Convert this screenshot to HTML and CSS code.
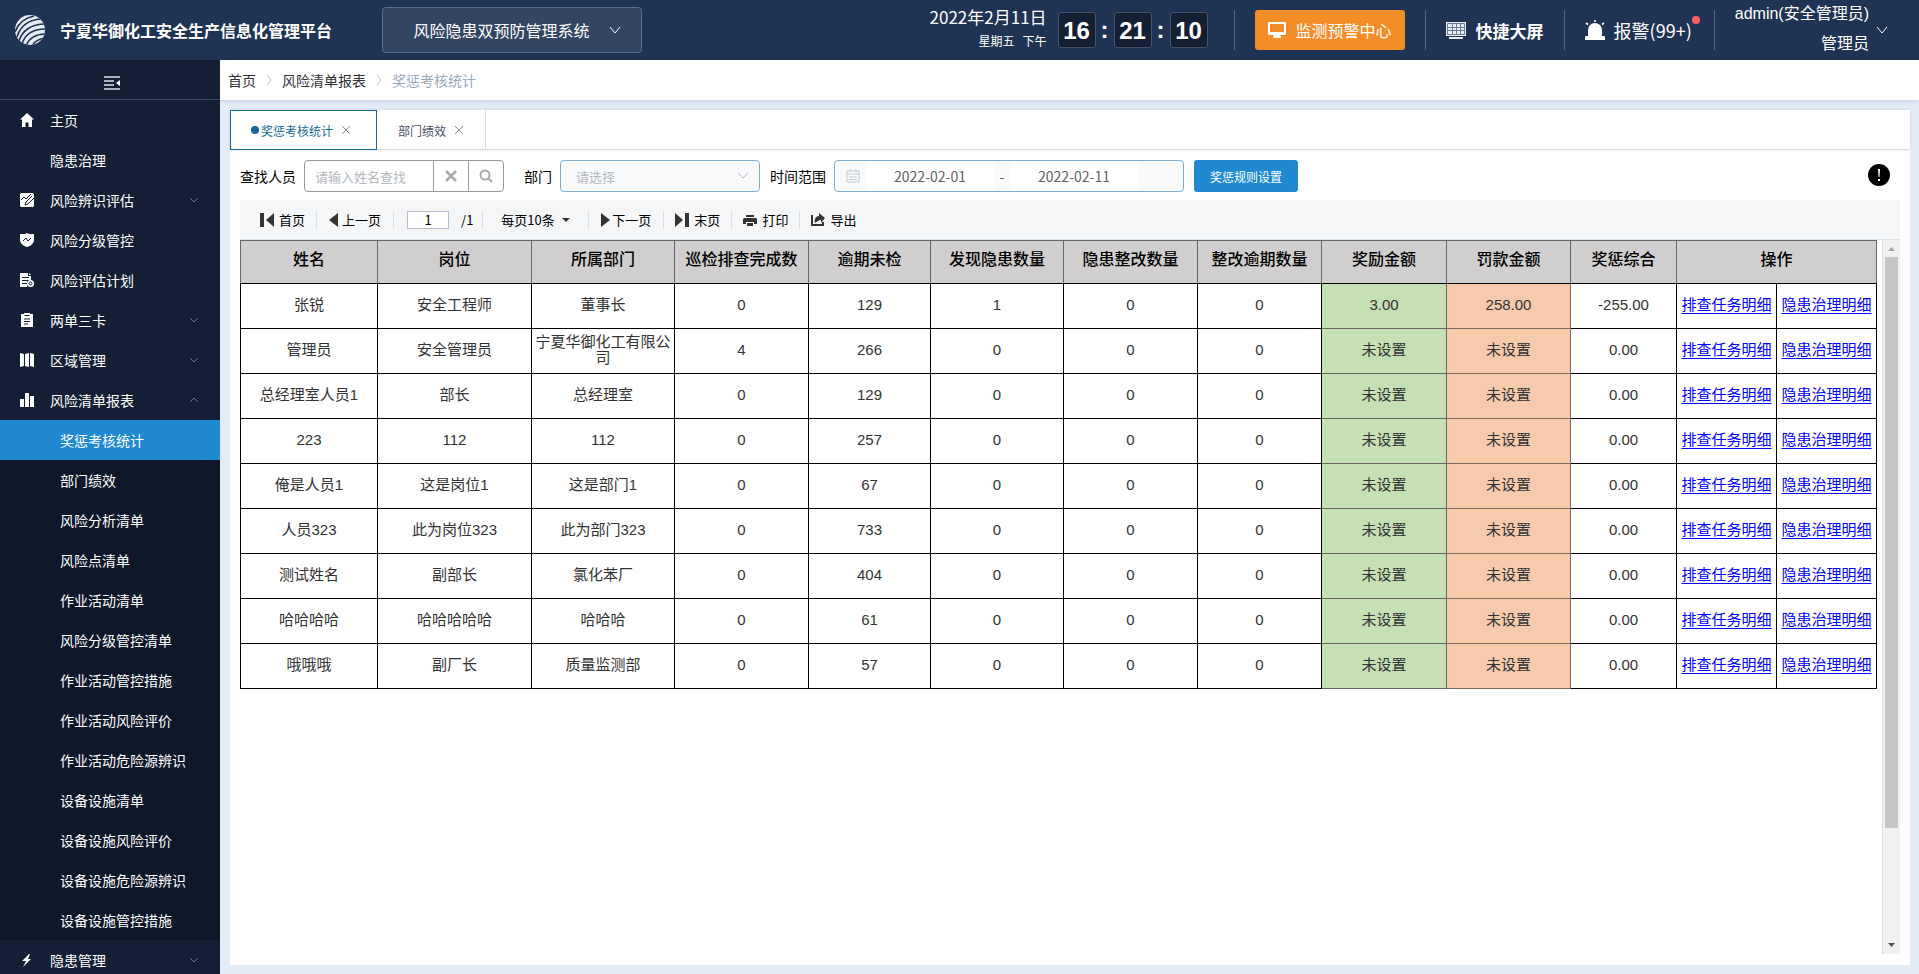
FILE: index.html
```
<!DOCTYPE html>
<html lang="zh-CN">
<head>
    <meta charset="UTF-8">
    <meta name="viewport" content="width=device-width, initial-scale=1.0">
    <title>宁夏华御化工安全生产信息化管理平台</title>
    <link rel="stylesheet" href="styles.css">
</head>
<body>
    <header class="header">
        <svg class="logo" viewBox="0 0 30 30">
            <defs><clipPath id="globe"><circle cx="15" cy="15" r="15"/></clipPath></defs>
            <g clip-path="url(#globe)">
                <path fill="#e6ebf2" d="M0 0h30v30H0z"/>
                <g fill="none" stroke="#1f3354" stroke-width="1.600">
                    <path d="M0 17C3 9 9 3 19 1"/>
                    <path d="M2 22C5 12 13 5 26 4"/>
                    <path d="M4 26C7 16 16 9 30 9"/>
                    <path d="M7 29C10 19 18 14 31 14"/>
                    <path d="M11 31C14 23 20 19 31 19"/>
                    <path d="M17 31C19 27 23 24 30 23"/>
                </g>
            </g>
        </svg>
        <h1 class="brand">宁夏华御化工安全生产信息化管理平台</h1>
        <button class="system-select" type="button">
            风险隐患双预防管理系统
            <svg class="chevron" viewBox="0 0 12 8"><path d="M1 1l5 6 5-6"/></svg>
        </button>

        <div class="clock">
            <div class="clock-date">
                <span class="date">2022年2月11日</span>
                <span class="week"><span>星期五</span><span>下午</span></span>
            </div>
            <span class="digit">16</span>
            <span class="colon">:</span>
            <span class="digit">21</span>
            <span class="colon">:</span>
            <span class="digit">10</span>
        </div>

        <div class="header-item">
            <button class="monitor-btn" type="button">
                <svg class="icon-monitor" viewBox="0 0 18 16"><path fill="#fff" fill-rule="evenodd" d="M1 0h16a1 1 0 0 1 1 1v11a1 1 0 0 1-1 1h-5v1h1v2H5v-2h1v-1H1a1 1 0 0 1-1-1V1a1 1 0 0 1 1-1zm1 2v8h14V2z"/></svg>
                监测预警中心
            </button>
        </div>
        <a class="header-item screen-link" href="#">
            <svg class="icon-screen" viewBox="0 0 20 17">
                <path fill="#e9edf3" d="M0 0h20v14H0zM3 15h14v2H3z"/>
                <path stroke="#6b7a93" fill="none" d="M1.500 1.500h17v11h-17zM2 5.500h16M2 8.500h16M6.500 2v10M10.500 2v10M14.500 2v10"/>
            </svg>
            快捷大屏
        </a>
        <a class="header-item alarm-link" href="#">
            <svg class="icon-alarm" viewBox="0 0 20 20">
                <path fill="#fff" d="M3 16v-6a7 7 0 0 1 14 0v6h2a1 1 0 0 1 1 1v3H0v-3a1 1 0 0 1 1-1z"/>
                <path stroke="#fff" stroke-width="1.600" d="M10 0v2M1 3l2 1.500M19 3l-2 1.500"/>
            </svg>
            报警(99+)
            <i class="badge"></i>
        </a>
        <button class="header-item user" type="button">
            <span class="user-name"><span>admin(安全管理员)</span><span>管理员</span></span>
            <svg class="chevron" viewBox="0 0 12 8"><path d="M1 1l5 6 5-6"/></svg>
        </button>
    </header>

    <div class="layout">
        <aside class="sidebar">
            <button class="collapse" type="button" aria-label="收起菜单">
                <svg viewBox="0 0 16 14"><path fill="none" stroke="#e0e4ea" stroke-width="1.600" d="M0 1h16M0 5h10M0 9h10M0 13h16"/><path fill="#fff" d="M16 4v6l-4-3z"/></svg>
            </button>
            <nav class="menu">
                <a class="menu-item" href="#">
                    <svg class="menu-icon" viewBox="0 0 14 14"><path d="M7 0l7 6.500h-2V14H8.500V9.500h-3V14H2V6.500H0z"/></svg>
                    主页
                </a>
                <a class="menu-item" href="#"><span class="menu-icon"></span>隐患治理</a>
                <a class="menu-item" href="#">
                    <svg class="menu-icon" viewBox="0 0 14 14"><path d="M1 0h12l1 1v12l-1 1H1l-1-1V1z"/><path class="cut" d="M1 7l3-3 2 2 5-5M12 3L6 9l-1 3 3-1 6-6"/></svg>
                    风险辨识评估
                    <svg class="arrow" viewBox="0 0 10 6"><path d="M1 1l4 4 4-4"/></svg>
                </a>
                <a class="menu-item" href="#">
                    <svg class="menu-icon" viewBox="0 0 14 14"><path d="M7 0l2 1h5v6c0 3-3 6-7 7-4-1-7-4-7-7V1h5z"/><path class="cut" d="M3 8l3-3 2 3 3-3"/></svg>
                    风险分级管控
                </a>
                <a class="menu-item" href="#">
                    <svg class="menu-icon" viewBox="0 0 14 14"><path d="M0 0h8v3h3v4H7v7H0zM9 0l2 2H9z"/><path class="cut" d="M2 4.500h7M2 7.500h5M2 10.500h5"/><circle cx="10.500" cy="10.500" r="3.500"/><circle class="cut" cx="10.500" cy="10.500" r="1.500"/></svg>
                    风险评估计划
                </a>
                <a class="menu-item" href="#">
                    <svg class="menu-icon" viewBox="0 0 14 14"><path d="M1 1h3V0h6v1h3v13H1z"/><path class="cut" d="M4.500 2.500h5M4 6h6M4 8.500h6M4 11h4"/></svg>
                    两单三卡
                    <svg class="arrow" viewBox="0 0 10 6"><path d="M1 1l4 4 4-4"/></svg>
                </a>
                <a class="menu-item" href="#">
                    <svg class="menu-icon" viewBox="0 0 14 14"><path d="M0 0l4 1v12l-4 1zM5 1l4-1v14l-4-1zM10 0l4 1v13l-4-1z"/></svg>
                    区域管理
                    <svg class="arrow" viewBox="0 0 10 6"><path d="M1 1l4 4 4-4"/></svg>
                </a>
                <a class="menu-item" href="#">
                    <svg class="menu-icon" viewBox="0 0 14 14"><path d="M0 6h4v8H0zM5 0h4v14H5zM10 3h4v11h-4z"/></svg>
                    风险清单报表
                    <svg class="arrow" viewBox="0 0 10 6"><path d="M1 5l4-4 4 4"/></svg>
                </a>
                <div class="submenu">
                    <a class="submenu-item active" href="#">奖惩考核统计</a>
                    <a class="submenu-item" href="#">部门绩效</a>
                    <a class="submenu-item" href="#">风险分析清单</a>
                    <a class="submenu-item" href="#">风险点清单</a>
                    <a class="submenu-item" href="#">作业活动清单</a>
                    <a class="submenu-item" href="#">风险分级管控清单</a>
                    <a class="submenu-item" href="#">作业活动管控措施</a>
                    <a class="submenu-item" href="#">作业活动风险评价</a>
                    <a class="submenu-item" href="#">作业活动危险源辨识</a>
                    <a class="submenu-item" href="#">设备设施清单</a>
                    <a class="submenu-item" href="#">设备设施风险评价</a>
                    <a class="submenu-item" href="#">设备设施危险源辨识</a>
                    <a class="submenu-item" href="#">设备设施管控措施</a>
                </div>
                <a class="menu-item" href="#">
                    <svg class="menu-icon" viewBox="0 0 14 14"><path d="M9 1L2 8h4l-3 6 8-8H8l2-5z"/></svg>
                    隐患管理
                    <svg class="arrow" viewBox="0 0 10 6"><path d="M1 1l4 4 4-4"/></svg>
                </a>
            </nav>
        </aside>

        <main class="main">
            <nav class="breadcrumb">
                <a href="#">首页</a>
                <svg viewBox="0 0 6 12"><path d="M1 1l4 5-4 5"/></svg>
                <a href="#">风险清单报表</a>
                <svg viewBox="0 0 6 12"><path d="M1 1l4 5-4 5"/></svg>
                <span class="current">奖惩考核统计</span>
            </nav>

            <section class="panel">
                <div class="tabs">
                    <button class="tab active" type="button"><i class="dot"></i>奖惩考核统计<svg class="close" viewBox="0 0 8 8"><path d="M0 0l8 8M8 0L0 8"/></svg></button>
                    <button class="tab" type="button">部门绩效<svg class="close" viewBox="0 0 8 8"><path d="M0 0l8 8M8 0L0 8"/></svg></button>
                </div>

                <div class="content">
                    <form class="filters">
                        <label for="person">查找人员</label>
                        <div class="search">
                            <input type="text" id="person" placeholder="请输入姓名查找">
                            <button type="button" aria-label="清空"><svg viewBox="0 0 14 14"><path stroke-width="2.500" d="M2 2l10 10M12 2L2 12"/></svg></button>
                            <button type="button" aria-label="查找"><svg viewBox="0 0 14 14"><circle cx="6" cy="6" r="4.500" stroke-width="2"/><path stroke-width="2" d="M9 9l4 4"/></svg></button>
                        </div>
                        <label for="dept">部门</label>
                        <div class="select-box">
                            <select id="dept"><option>请选择</option></select>
                            <svg class="select-arrow" viewBox="0 0 12 8"><path d="M1 1l5 5 5-5"/></svg>
                        </div>
                        <label for="startDate">时间范围</label>
                        <div class="date-range">
                            <svg viewBox="0 0 14 14"><path d="M1 2h12v11H1zM1 5h12M4 0v3M10 0v3M3 8h8M3 10.500h8"/></svg>
                            <input type="text" id="startDate" value="2022-02-01">
                            <span>-</span>
                            <input type="text" aria-label="结束日期" value="2022-02-11">
                        </div>
                        <button class="btn" type="button">奖惩规则设置</button>
                        <button class="tip" type="button" aria-label="说明">
                            <svg viewBox="0 0 22 22"><circle cx="11" cy="11" r="11"/><path fill="#fff" d="M10 5h2l-.5 8h-1zM10 15h2v2h-2z"/></svg>
                        </button>
                    </form>

                    <div class="toolbar">
                        <button type="button" class="tool"><svg class="i14" viewBox="0 0 14 14"><path d="M0 0h4v14H0zM14 0v14L6 7z"/></svg>首页</button>
                        <button type="button" class="tool tool-prev"><svg class="i9" viewBox="0 0 9 14"><path d="M9 0v14L0 7z"/></svg>上一页</button>
                        <span class="tool tool-page"><input type="text" aria-label="页码" value="1"><span>/1</span></span>
                        <span class="tool tool-size"><select aria-label="每页条数"><option>每页10条</option></select><svg class="caret" viewBox="0 0 8 4"><path d="M0 0h8L4 4z"/></svg></span>
                        <button type="button" class="tool tool-next"><svg class="i9" viewBox="0 0 9 14"><path d="M0 0v14l9-7z"/></svg>下一页</button>
                        <button type="button" class="tool"><svg class="i14" viewBox="0 0 14 14"><path d="M0 0v14l8-7zM10 0h4v14h-4z"/></svg>末页</button>
                        <button type="button" class="tool"><svg class="i14" viewBox="0 0 14 14"><path fill-rule="evenodd" d="M3 2h8v2H3zM1 5h12l1 1v5h-3V9H3v2H0V6zM4 10h6v3H4z"/></svg>打印</button>
                        <button type="button" class="tool"><svg class="i14" viewBox="0 0 14 14"><path d="M0 2h2v9h9v-2h2v4H0z"/><path d="M8 0l6 5-4 5V7C7 7 6 9 4 10 3 6 5 3 8 3z"/></svg>导出</button>
                    </div>

                    <div class="report">
                        <div class="table-wrap">
                            <table class="stat-table">
                                <colgroup>
                                    <col class="c-name"><col class="c-post"><col class="c-dept"><col class="c-done"><col class="c-late"><col class="c-find"><col class="c-fix">
                                    <col class="c-over"><col class="c-award"><col class="c-fine"><col class="c-sum"><col class="c-link"><col class="c-link">
                                </colgroup>
                                <thead>
                                    <tr>
                                        <th>姓名</th>
                                        <th>岗位</th>
                                        <th>所属部门</th>
                                        <th>巡检排查完成数</th>
                                        <th>逾期未检</th>
                                        <th>发现隐患数量</th>
                                        <th>隐患整改数量</th>
                                        <th>整改逾期数量</th>
                                        <th>奖励金额</th>
                                        <th>罚款金额</th>
                                        <th>奖惩综合</th>
                                        <th colspan="2">操作</th>
                                    </tr>
                                </thead>
                                <tbody>
                                    <tr><td>张锐</td><td>安全工程师</td><td>董事长</td><td>0</td><td>129</td><td>1</td><td>0</td><td>0</td><td class="award">3.00</td><td class="fine">258.00</td><td>-255.00</td><td><a href="#">排查任务明细</a></td><td><a href="#">隐患治理明细</a></td></tr>
                                    <tr><td>管理员</td><td>安全管理员</td><td>宁夏华御化工有限公司</td><td>4</td><td>266</td><td>0</td><td>0</td><td>0</td><td class="award">未设置</td><td class="fine">未设置</td><td>0.00</td><td><a href="#">排查任务明细</a></td><td><a href="#">隐患治理明细</a></td></tr>
                                    <tr><td>总经理室人员1</td><td>部长</td><td>总经理室</td><td>0</td><td>129</td><td>0</td><td>0</td><td>0</td><td class="award">未设置</td><td class="fine">未设置</td><td>0.00</td><td><a href="#">排查任务明细</a></td><td><a href="#">隐患治理明细</a></td></tr>
                                    <tr><td>223</td><td>112</td><td>112</td><td>0</td><td>257</td><td>0</td><td>0</td><td>0</td><td class="award">未设置</td><td class="fine">未设置</td><td>0.00</td><td><a href="#">排查任务明细</a></td><td><a href="#">隐患治理明细</a></td></tr>
                                    <tr><td>俺是人员1</td><td>这是岗位1</td><td>这是部门1</td><td>0</td><td>67</td><td>0</td><td>0</td><td>0</td><td class="award">未设置</td><td class="fine">未设置</td><td>0.00</td><td><a href="#">排查任务明细</a></td><td><a href="#">隐患治理明细</a></td></tr>
                                    <tr><td>人员323</td><td>此为岗位323</td><td>此为部门323</td><td>0</td><td>733</td><td>0</td><td>0</td><td>0</td><td class="award">未设置</td><td class="fine">未设置</td><td>0.00</td><td><a href="#">排查任务明细</a></td><td><a href="#">隐患治理明细</a></td></tr>
                                    <tr><td>测试姓名</td><td>副部长</td><td>氯化苯厂</td><td>0</td><td>404</td><td>0</td><td>0</td><td>0</td><td class="award">未设置</td><td class="fine">未设置</td><td>0.00</td><td><a href="#">排查任务明细</a></td><td><a href="#">隐患治理明细</a></td></tr>
                                    <tr><td>哈哈哈哈</td><td>哈哈哈哈哈</td><td>哈哈哈</td><td>0</td><td>61</td><td>0</td><td>0</td><td>0</td><td class="award">未设置</td><td class="fine">未设置</td><td>0.00</td><td><a href="#">排查任务明细</a></td><td><a href="#">隐患治理明细</a></td></tr>
                                    <tr><td>哦哦哦</td><td>副厂长</td><td>质量监测部</td><td>0</td><td>57</td><td>0</td><td>0</td><td>0</td><td class="award">未设置</td><td class="fine">未设置</td><td>0.00</td><td><a href="#">排查任务明细</a></td><td><a href="#">隐患治理明细</a></td></tr>
                                </tbody>
                            </table>
                        </div>
                        <div class="scrollbar">
                            <svg viewBox="0 0 17 17"><path fill="#a3a3a3" d="M5 11h7L8.500 7z"/></svg>
                            <div class="track"><div class="thumb"></div></div>
                            <svg viewBox="0 0 17 17"><path fill="#505050" d="M5 6h7l-3.500 4z"/></svg>
                        </div>
                    </div>
                </div>
            </section>
        </main>
    </div>
</body>
</html>
```

FILE: styles.css
```
* {
    box-sizing: border-box;
}

body {
    display: flex;
    flex-direction: column;
    height: 100vh;
    margin: 0;
    overflow: hidden;
    font-family: "Noto Sans CJK SC", sans-serif;
    font-size: 14px;
    color: #000;
    background: #e4ecf8;
}

button, input, select {
    font: inherit;
    color: inherit;
    margin: 0;
    padding: 0;
    border: none;
    background: none;
}

button {
    cursor: pointer;
}

a {
    color: inherit;
    text-decoration: none;
}

svg {
    flex: none;
}

/* header */
.header {
    display: flex;
    align-items: center;
    height: 60px;
    flex: none;
    padding: 0 31px 0 15px;
    background: #1f3354;
    color: #fff;
}

.logo {
    width: 30px;
    height: 30px;
}

.brand {
    margin: 0 50px 0 15px;
    font-size: 16px;
    font-weight: bold;
    white-space: nowrap;
}

.system-select {
    display: flex;
    align-items: center;
    justify-content: center;
    gap: 19px;
    width: 260px;
    height: 46px;
    padding-left: 10px;
    border: 1px solid #566d92;
    border-radius: 4px;
    background: #324563;
    font-size: 16px;
}

.chevron {
    width: 12px;
    height: 8px;
    fill: none;
    stroke: #fff;
}

.clock {
    display: flex;
    align-items: center;
    margin: 0 26px 0 auto;
}

.clock-date {
    display: flex;
    flex-direction: column;
    align-items: flex-end;
    margin-right: 11px;
    padding-bottom: 2px;
}

.date {
    font-size: 17px;
    line-height: 24px;
}

.week {
    display: flex;
    gap: 8px;
    font-size: 12px;
    line-height: 24px;
}

.digit {
    width: 38px;
    height: 36px;
    border: 1px solid #45536a;
    border-radius: 3px;
    background: #141f33;
    font: bold 24px/36px "Liberation Sans", Arial, sans-serif;
    text-align: center;
}

.colon {
    width: 18px;
    font: bold 24px/36px "Liberation Sans", Arial, sans-serif;
    text-align: center;
}

.header-item {
    display: flex;
    align-items: center;
    height: 40px;
    padding: 0 20px;
    border-left: 1px solid #566682;
    white-space: nowrap;
}

.monitor-btn {
    display: flex;
    align-items: center;
    justify-content: center;
    gap: 10px;
    width: 150px;
    height: 40px;
    border-radius: 3px;
    background: #f28d28;
    font-size: 16px;
}

.icon-monitor {
    width: 18px;
    height: 16px;
}

.screen-link {
    gap: 10px;
    font-size: 17px;
    font-weight: bold;
}

.icon-screen {
    width: 20px;
    height: 17px;
}

.alarm-link {
    position: relative;
    gap: 9px;
    padding-right: 22px;
    font-size: 18px;
}

.icon-alarm {
    width: 20px;
    height: 20px;
}

.badge {
    position: absolute;
    top: 6px;
    right: 14px;
    width: 8px;
    height: 8px;
    border-radius: 50%;
    background: #ff5f5f;
}

.user {
    gap: 7px;
    padding-right: 0;
}

.user-name {
    display: flex;
    flex-direction: column;
    align-items: flex-end;
    padding-bottom: 2px;
    font-family: "Liberation Sans", "Noto Sans CJK SC", sans-serif;
    font-size: 16px;
    line-height: 30px;
}

/* sidebar */
.layout {
    display: flex;
    flex: 1;
    min-height: 0;
}

.sidebar {
    width: 220px;
    flex: none;
    overflow: hidden;
    background: #141f35;
    color: #fff;
}

.collapse {
    display: flex;
    align-items: center;
    justify-content: center;
    width: 100%;
    height: 40px;
    padding: 6px 0 0 4px;
    border-bottom: 1px solid #434c5d;
}

.collapse svg {
    width: 16px;
    height: 14px;
}

.menu-item {
    display: flex;
    align-items: center;
    height: 40px;
    padding: 0 21px 0 20px;
}

.menu-icon {
    width: 14px;
    height: 14px;
    margin-right: 16px;
    fill: #fff;
}

.menu-icon .cut {
    fill: none;
    stroke: #141f35;
}

.arrow {
    width: 10px;
    height: 6px;
    margin-left: auto;
    fill: none;
    stroke: #6f7786;
}

.submenu {
    background: #0f172a;
}

.submenu-item {
    display: block;
    padding-left: 60px;
    line-height: 40px;
}

.submenu-item.active {
    background: #1f8ad2;
}

/* main */
.main {
    display: flex;
    flex-direction: column;
    flex: 1;
    min-width: 0;
}

.breadcrumb {
    display: flex;
    align-items: center;
    gap: 10px;
    height: 40px;
    flex: none;
    padding: 0 8px;
    background: #fff;
    box-shadow: 0 1px 5px rgba(0, 40, 80, 0.15);
    color: #303133;
}

.breadcrumb svg {
    width: 6px;
    height: 12px;
    fill: none;
    stroke: #c0c4cc;
}

.breadcrumb .current {
    color: #97a8be;
}

.panel {
    display: flex;
    flex-direction: column;
    flex: 1;
    min-height: 0;
    margin: 10px 9px 9px 10px;
    background: #fff;
}

.tabs {
    display: flex;
    height: 40px;
    flex: none;
    border-bottom: 1px solid #d8dce5;
    box-shadow: 0 0 3px rgba(0, 0, 0, 0.12);
    font-size: 12px;
    color: #495060;
}

.tab {
    display: flex;
    align-items: center;
    height: 40px;
    padding: 0 22px 0 21px;
    border-right: 1px solid #d8dce5;
}

.tab.active {
    padding: 0 26px 0 20px;
    border: 1px solid #156a94;
    color: #156a94;
}

.dot {
    width: 8px;
    height: 8px;
    margin-right: 2px;
    border-radius: 50%;
    background: #156a94;
}

.close {
    width: 8px;
    height: 8px;
    margin-left: 9px;
    fill: none;
    stroke: #8a929c;
}

.content {
    display: flex;
    flex-direction: column;
    flex: 1;
    min-height: 0;
    padding: 10px 10px 11px;
}

.filters {
    display: flex;
    align-items: center;
    height: 32px;
    flex: none;
    white-space: nowrap;
}

.filters label {
    margin-right: 8px;
}

.search {
    display: flex;
    width: 200px;
    height: 32px;
    margin-right: 20px;
    border: 1px solid #999;
    border-radius: 4px;
}

.search input {
    flex: 1;
    min-width: 0;
    padding-left: 10px;
    font-size: 13px;
}

.search input::placeholder {
    color: #b4b8c0;
}

.search button {
    width: 35px;
    border-left: 1px solid #999;
}

.search svg {
    display: block;
    width: 14px;
    height: 14px;
    margin: auto;
    fill: none;
    stroke: #aaa;
}

.select-box {
    position: relative;
    width: 200px;
    margin-right: 10px;
}

.select-box select {
    display: block;
    appearance: none;
    width: 100%;
    height: 32px;
    padding-left: 15px;
    border: 1px solid #7eaed3;
    border-radius: 4px;
    background: #f9fafc;
    color: #b4b8c0;
    font-size: 13px;
}

.select-arrow {
    position: absolute;
    top: 12px;
    right: 11px;
    width: 12px;
    height: 8px;
    fill: none;
    stroke: #b4b8c0;
}

.date-range {
    display: flex;
    align-items: center;
    width: 350px;
    height: 32px;
    margin-right: 10px;
    padding-left: 11px;
    border: 1px solid #7eaed3;
    border-radius: 4px;
    background: #f9fafc;
    color: #606266;
}

.date-range svg {
    width: 14px;
    height: 14px;
    margin-right: 6px;
    fill: none;
    stroke: #c6c9d0;
}

.date-range input {
    width: 128px;
    height: 24px;
    background: #fff;
    text-align: center;
}

.date-range span {
    width: 16px;
    text-align: center;
}

.btn {
    width: 104px;
    height: 32px;
    border-radius: 3px;
    background: #1f8ad2;
    color: #fff;
    font-size: 12px;
}

.tip {
    width: 22px;
    height: 22px;
    margin: 0 10px 3px auto;
}

.tip svg {
    display: block;
}

/* pager */
.toolbar {
    display: flex;
    align-items: center;
    height: 40px;
    flex: none;
    margin-top: 8px;
    padding-left: 8px;
    border-bottom: 1px solid #dfe2e6;
    background: #f5f6f8;
    font-size: 13px;
}

.tool {
    display: flex;
    align-items: center;
    gap: 5px;
    height: 18px;
    padding: 0 11px;
    border-left: 1px solid #dcdfe3;
    white-space: nowrap;
}

.tool:first-child {
    border-left-color: transparent;
}

.tool svg {
    fill: #333;
}

.tool-prev {
    gap: 4px;
    padding: 0 12px;
}

.tool-next {
    gap: 2px;
    padding: 0 12px;
}

.i14 {
    width: 14px;
    height: 14px;
}

.i9 {
    width: 9px;
    height: 14px;
}

.tool-page {
    gap: 12px;
    padding: 0 9px 0 13px;
}

.tool-page input {
    width: 42px;
    height: 18px;
    border: 1px solid #b5bace;
    background: #fff;
    text-align: center;
}

.tool-size {
    gap: 7px;
    padding: 0 18px;
}

.tool-size select {
    appearance: none;
}

.caret {
    width: 8px;
    height: 4px;
}

/* report */
.report {
    display: flex;
    flex: 1;
    min-height: 0;
}

.table-wrap {
    flex: 1;
    min-width: 0;
    padding-right: 5px;
    overflow: hidden;
}

.stat-table {
    width: 100%;
    table-layout: fixed;
    border-collapse: collapse;
    font-family: "Liberation Sans", "Noto Sans CJK SC", sans-serif;
    font-size: 15px;
    line-height: 16px;
    text-align: center;
}

.stat-table th {
    height: 43px;
    padding: 0 0 4px;
    border: 1px solid #666;
    border-bottom-color: #000;
    background: #d0cece;
    font-size: 16px;
    font-weight: 500;
}

.stat-table td {
    height: 45px;
    padding: 0 0 2px;
    border: 1px solid #000;
    color: #333;
}

.stat-table .award {
    border-color: #666;
    background: #c5e0b3;
}

.stat-table .fine {
    border-color: #806a5c;
    background: #f7caac;
}

.stat-table a {
    color: #00f;
    text-decoration: underline;
    text-underline-offset: 3px;
}

.c-name { width: 137px; }
.c-post { width: 154px; }
.c-dept { width: 143px; }
.c-done { width: 134px; }
.c-late { width: 122px; }
.c-find { width: 133px; }
.c-fix { width: 134px; }
.c-over { width: 124px; }
.c-award { width: 125px; }
.c-fine { width: 124px; }
.c-sum { width: 106px; }
.c-link { width: 100px; }

.scrollbar {
    display: flex;
    flex-direction: column;
    width: 18px;
    border-left: 1px solid #dcdcdc;
    background: #f1f1f1;
}

.track {
    flex: 1;
    padding: 0 2px;
}

.thumb {
    height: 84%;
    background: #c6c6c6;
}
```
